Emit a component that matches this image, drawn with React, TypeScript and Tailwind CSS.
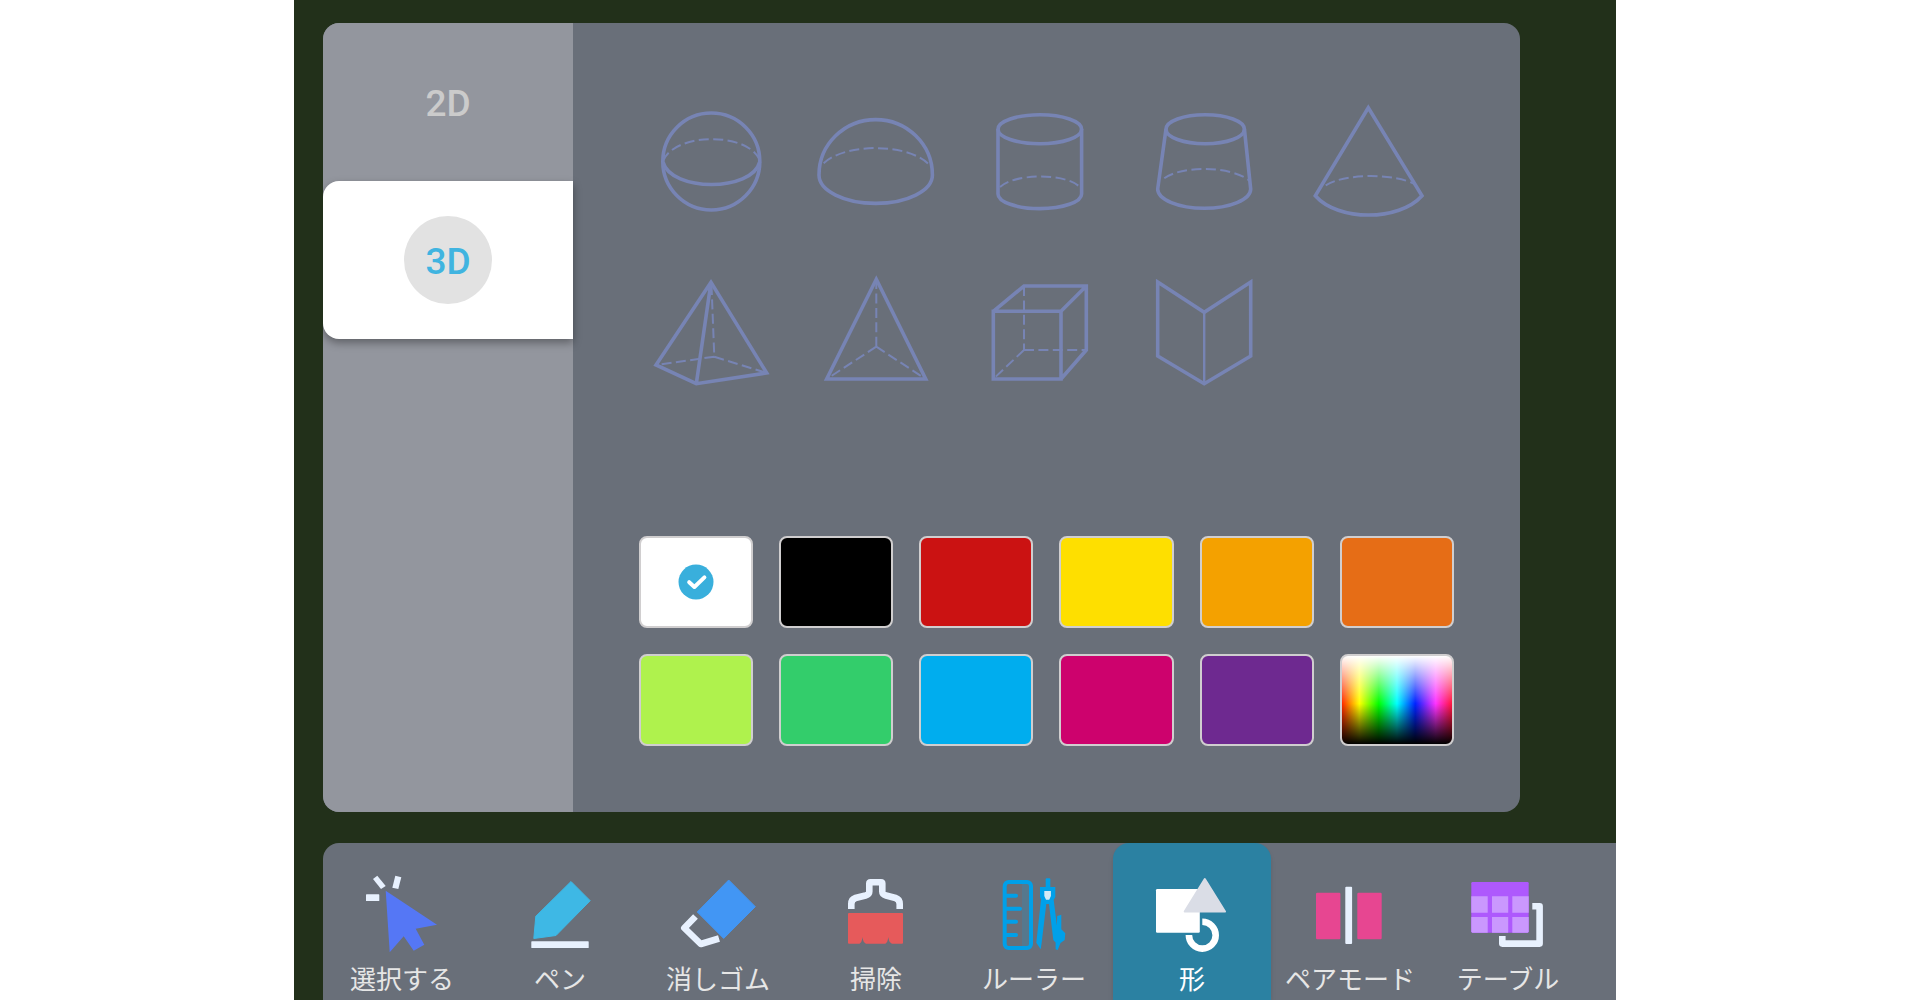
/* Whiteboard shape picker: 2D/3D tabs, solids, colours and the bottom toolbar */

import { useState } from 'react'
import type { ReactNode } from 'react'

const DASH = { strokeWidth: 2, strokeDasharray: '10 4.4' }

const SOLIDS: { name: string; art: ReactNode }[] = [
  {
    name: '球',
    art: (
      <>
        <circle cx="60.3" cy="60.5" r="48.5" />
        <path d="M12 61C20 91 101 91 108.7 61" />
        <path d="M12 60C24 31 97 31 108.7 59" {...DASH} />
      </>
    ),
  },
  {
    name: '半球',
    art: (
      <>
        <path d="M4 74A56.7 55.4 0 0 1 117.4 74A56.7 28.4 0 0 1 4 74Z" />
        <path d="M8.7 62.3C30 42 91 42 113 62.5" {...DASH} />
      </>
    ),
  },
  {
    name: '円柱',
    art: (
      <>
        <ellipse cx="60.8" cy="28.2" rx="41.8" ry="14.5" />
        <path d="M19 28V93A41.8 14.6 0 0 0 102.6 93V28" />
        <path d="M21 86C35 72.5 85 72 99.7 85" {...DASH} />
      </>
    ),
  },
  {
    name: '円錐台',
    art: (
      <>
        <ellipse cx="62.2" cy="28.2" rx="39.2" ry="14.5" />
        <path d="M23 28L14.7 88A46.5 19.3 0 0 0 107.7 88L101.4 28" />
        <path d="M21.3 77.3C38 64.5 88 64.5 106.3 79.7" {...DASH} />
      </>
    ),
  },
  {
    name: '円錐',
    art: (
      <>
        <path d="M61.3 6.7L8.3 94.7C31 120.5 92 120.5 115 94.7Z" />
        <path d="M18.7 84.3C38 72 90 72 109.7 84.3" {...DASH} />
      </>
    ),
  },
  {
    name: '四角錐',
    art: (
      <>
        <path d="M60 10.3L5 93L45.3 111.7L115.7 101ZL45.3 111.7" />
        <path d="M60.5 13L63.3 84.7M63.3 84.7L5 93M63.3 84.7L115.7 101" {...DASH} />
      </>
    ),
  },
  {
    name: '三角錐',
    art: (
      <>
        <path d="M61.3 7.3L11.7 107H110.7Z" />
        <path d="M61.3 74.7V8M61.3 74.7L11.7 107M61.3 74.7L110.7 107" {...DASH} />
      </>
    ),
  },
  {
    name: '立方体',
    art: (
      <>
        <path d="M14.3 39.3H82V107H14.3ZL45 14H107.3V78L82 107M82 39.3L107.3 14" />
        <path d="M45 14V78M45 78H107M45 78L14.3 107" {...DASH} />
      </>
    ),
  },
  {
    name: '見開き',
    art: (
      <>
        <path d="M14.7 10L61.2 40.3L107.7 10V84L61.2 111.7L14.7 84Z" />
        <path d="M61.2 40.3V111.7" strokeWidth="2.4" />
      </>
    ),
  },
]

const COLORS = [
  { name: '白', bg: 'bg-white' },
  { name: '黒', bg: 'bg-black' },
  { name: '赤', bg: 'bg-[#cb1212]' },
  { name: '黄', bg: 'bg-[#fedf00]' },
  { name: '山吹', bg: 'bg-[#f4a100]' },
  { name: 'オレンジ', bg: 'bg-[#e66d16]' },
  { name: '黄緑', bg: 'bg-[#aff24d]' },
  { name: '緑', bg: 'bg-[#33cd6b]' },
  { name: '水色', bg: 'bg-[#00adee]' },
  { name: 'ピンク', bg: 'bg-[#cd026d]' },
  { name: '紫', bg: 'bg-[#6e2990]' },
  {
    name: 'カスタム',
    bg: 'bg-[linear-gradient(to_bottom,white_2%,transparent_54%,black_98%),linear-gradient(to_right,#f10,#ff0_17%,#0f0_34%,#0ff_50%,#02f_66%,#f3f_84%,#f12)] bg-origin-border',
  },
]

const TOOLS: { label: string; icon: ReactNode }[] = [
  {
    label: '選択する',
    icon: (
      <>
        <path fill="#5577f5" d="M23.7 19.7L75 53.7L53.7 57.7L62.3 73.7L51.7 79.7L41.7 65.3L27.7 81.3Z" />
        <g fill="#e8f1fe">
          <rect x="4" y="23.3" width="13.3" height="6.7" rx=".6" />
          <path d="M11 8L15.3 4.7L23.7 15L19 18Z" />
          <path d="M33.3 4.7L39.3 6.3L36.3 18L30.3 16.7Z" />
        </g>
      </>
    ),
  },
  {
    label: 'ペン',
    icon: (
      <>
        <path fill="#3eb8e5" stroke="#3eb8e5" strokeLinejoin="round" d="M51 10.5L70.2 29.7L36 64.5L13.8 67.5L15.8 45.3Z" />
        <rect x="11.3" y="70.3" width="57.4" height="6.7" rx=".6" fill="#e8f1fe" />
      </>
    ),
  },
  {
    label: '消しゴム',
    icon: (
      <>
        <path fill="#4296f4" stroke="#4296f4" strokeLinejoin="round" d="M50.7 9L77.3 35.7L45.7 67.4L19.3 41Z" />
        <path fill="none" stroke="#e8f1fe" strokeWidth="6.6" strokeLinejoin="round" d="M17.5 45.5L6.3 57L22.8 73L41 67.5" />
      </>
    ),
  },
  {
    label: '掃除',
    icon: (
      <>
        <path
          fill="none"
          stroke="#e8f1fe"
          strokeWidth="6.6"
          d="M15.3 38V33C15.3 29.5 16.5 28 19.5 27L29.5 24.5C32 23.8 33.3 22.8 33.3 20.5V12.5Q33.3 11.3 34.5 11.3H45Q46.3 11.3 46.3 12.5V20.5C46.3 22.8 47.5 23.8 50 24.5L59.5 27C62.5 28 63.7 29.5 63.7 33V38"
        />
        <path
          fill="#e65a5b"
          d="M13 42H66Q67 42 67 43V71.7Q67 72.7 66 72.7H56Q52.8 71.5 52.3 66Q51.8 71.5 49.3 72.7H30Q27 71.5 26.4 66Q26 71.5 23.5 72.7H13Q12 72.7 12 71.7V43Q12 42 13 42Z"
        />
      </>
    ),
  },
  {
    label: 'ルーラー',
    icon: (
      <>
        <rect x="28" y="13" width="7" height="62" fill="#00a0e9" opacity=".18" />
        <g fill="none" stroke="#00a0e9" strokeWidth="4">
          <rect x="10.7" y="11" width="26.3" height="66" rx="4" />
          <path strokeLinecap="round" d="M12 24.7H22M12 37.7H26M12 50.7H22M12 64H22" />
        </g>
        <g fill="#00a0e9">
          <rect x="51.7" y="7.3" width="4.6" height="10" rx="1" />
          <path d="M46 16H61.3V26L59.7 29L62.9 54.5L63.2 45L67.3 43.7V58.3L71.3 62.3L70.7 69L66.5 72L63.7 79L61.6 78.3V71.5L59.3 69L55 33H52.3L47.6 72.3L46.7 78.3L42.3 71.7L47 28.5L46 26Z" />
        </g>
        <path fill="#d5eaf6" d="M50.3 20H56.9V25L55.2 28.7H52L50.3 25Z" />
      </>
    ),
  },
  {
    label: '形',
    icon: (
      <>
        <rect x="4" y="18" width="43.8" height="43.8" rx="1.2" fill="#fff" />
        <path fill="#dadde6" stroke="#dadde6" strokeWidth="2" strokeLinejoin="round" d="M52.8 8L73 40.6H32.7Z" />
        <path fill="none" stroke="#fff" strokeWidth="6.6" d="M36.9 64A13.4 13.4 0 1 0 50.3 50.8" />
      </>
    ),
  },
  {
    label: 'ペアモード',
    icon: (
      <>
        <rect x="6" y="21.7" width="24.4" height="46.5" rx="1.2" fill="#e74691" />
        <rect x="47.3" y="21.7" width="24.4" height="46.5" rx="1.2" fill="#e74691" />
        <rect x="35.3" y="15.7" width="6.8" height="57.3" rx="1" fill="#e8f1fe" />
      </>
    ),
  },
  {
    label: 'テーブル',
    icon: (
      <>
        <rect x="3.3" y="11" width="57.4" height="50.7" rx="1.2" fill="#ae59fd" />
        <path
          fill="#ca98fe"
          d="M3.3 25.3H19.7V41.7H3.3ZM24 25.3H40.2V41.7H24ZM44.3 25.3H60.7V41.7H44.3ZM3.3 46H19.7V61.7H4.3L3.3 60.7ZM24 46H40.2V61.7H24ZM44.3 46H60.7V60.7L59.7 61.7H44.3Z"
        />
        <path fill="none" stroke="#e8f1fe" strokeWidth="6.6" strokeLinejoin="round" d="M64.3 35.3H71.6V72.6H34.3V65" />
      </>
    ),
  },
]

export default function App() {
  const [tab, setTab] = useState('3D')
  const [color, setColor] = useState('白')
  const [tool, setTool] = useState('形')

  return (
    <div className="min-h-screen bg-white font-['Roboto','Noto_Sans_CJK_JP',sans-serif]">
      <main className="mx-auto flex min-h-screen w-full max-w-[1322px] flex-col bg-[#22301a] pt-[23px] pl-[29px]">
        <section className="mr-24 flex overflow-hidden rounded-2xl bg-[#696f79]">
          <div className="w-[250px] shrink-0 bg-[#93969e]">
            {['2D', '3D'].map((name) => (
              <Tab key={name} name={name} active={tab === name} onClick={() => setTab(name)} />
            ))}
          </div>

          <div className="flex flex-1 flex-col gap-36 px-[66px] pt-[78px] pb-[66px]">
            <div className="flex flex-wrap gap-x-11 gap-y-[51px] pl-3">
              {SOLIDS.map((s) => (
                <button key={s.name} aria-label={s.name} className="size-[120px]">
                  <svg viewBox="0 0 120 120" fill="none" stroke="#7784b4" strokeWidth="3.6" className="size-full">
                    {s.art}
                  </svg>
                </button>
              ))}
            </div>

            <div className="grid grid-cols-6 gap-[26px]">
              {COLORS.map((c) => (
                <button
                  key={c.name}
                  aria-label={c.name}
                  aria-pressed={color === c.name}
                  onClick={() => setColor(c.name)}
                  className={`flex h-[92px] items-center justify-center rounded-lg border-2 border-[#d0cecf] ${c.bg}`}
                >
                  {color === c.name && <CheckMark />}
                </button>
              ))}
            </div>
          </div>
        </section>

        <nav className="mt-[31px] flex flex-1 overflow-hidden rounded-tl-2xl bg-[#696f79]">
          {TOOLS.map((t) => (
            <button
              key={t.label}
              onClick={() => setTool(t.label)}
              className={`flex w-[158px] shrink-0 flex-col items-center gap-[13px] pt-7 ${
                tool === t.label ? 'rounded-t-2xl bg-[#2b81a2] text-white shadow-md' : 'text-[#e6e6e6]'
              }`}
            >
              <svg viewBox="0 0 80 80" className="size-20 overflow-visible">
                {t.icon}
              </svg>
              <span className="text-[26px] leading-8 whitespace-nowrap">{t.label}</span>
            </button>
          ))}
        </nav>
      </main>
    </div>
  )
}

function Tab({ name, active, onClick }: { name: string; active: boolean; onClick: () => void }) {
  return (
    <button
      onClick={onClick}
      className={`flex h-[158px] w-full items-center justify-center text-[37px] font-medium ${
        active ? 'rounded-l-2xl bg-white text-[#40b4e0] shadow-[0_4px_8px_rgba(0,0,0,0.35)]' : 'text-[#cbcbcb]'
      }`}
    >
      <span className={`flex size-22 items-center justify-center rounded-full pt-1 ${active ? 'bg-[#e2e2e2]' : ''}`}>
        {name}
      </span>
    </button>
  )
}

function CheckMark() {
  return (
    <svg viewBox="0 0 36 36" className="size-9">
      <circle cx="18" cy="18" r="17.5" fill="#39afdc" />
      <path
        d="M11.2 18.2L16.4 23L26.4 13.4"
        fill="none"
        stroke="#fff"
        strokeWidth="4"
        strokeLinecap="round"
        strokeLinejoin="round"
      />
    </svg>
  )
}
